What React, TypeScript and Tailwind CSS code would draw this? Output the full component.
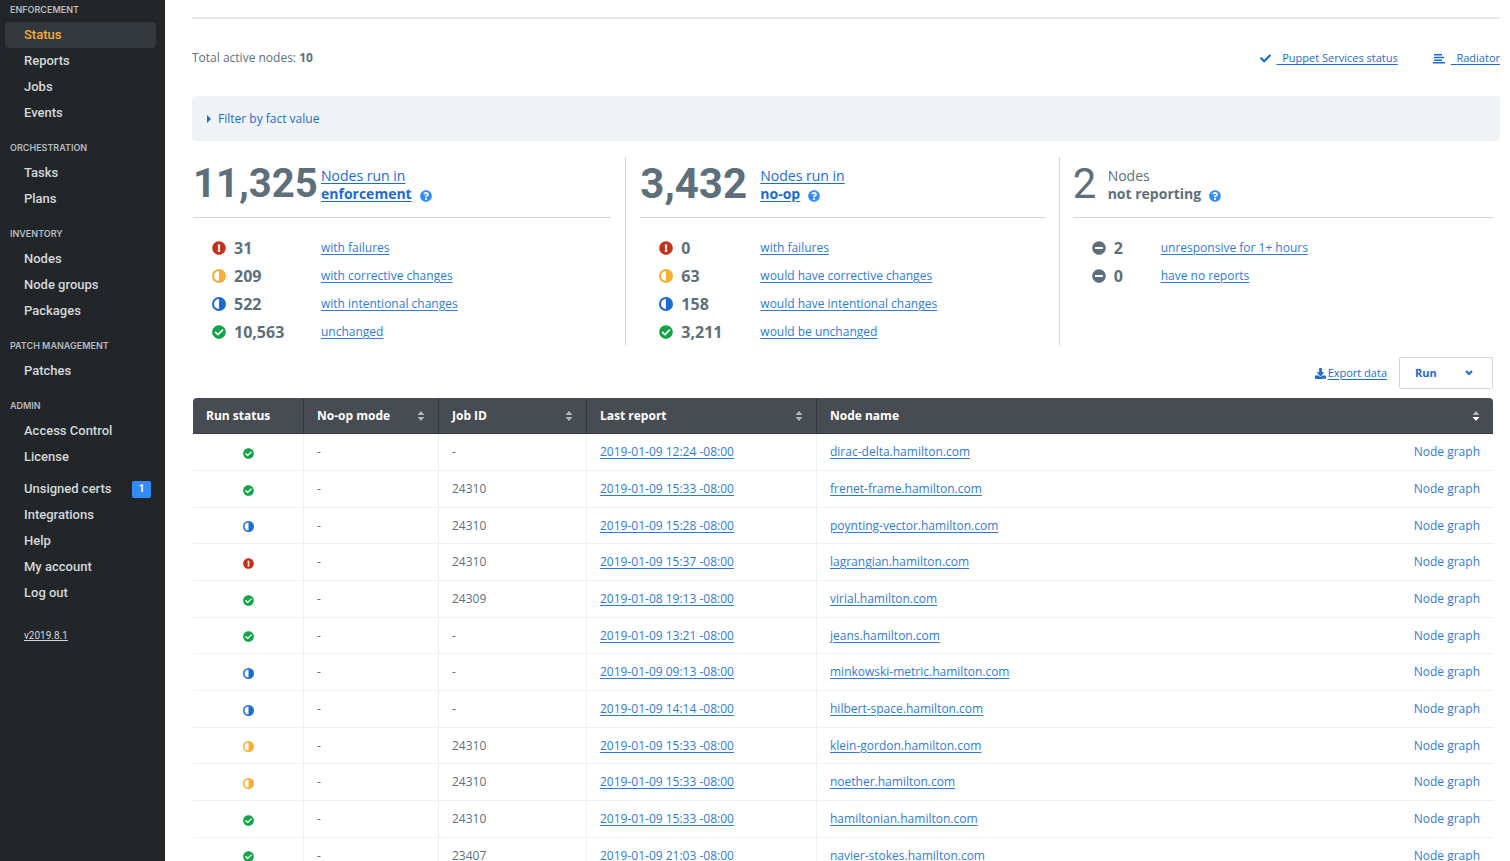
import type { ReactNode } from 'react'
import { FaCheck, FaCheckCircle, FaDownload, FaExclamationCircle, FaMinusCircle, FaQuestionCircle } from 'react-icons/fa'

type Status = 'failed' | 'corrective' | 'intentional' | 'unchanged' | 'silent'

type NavItem = { label: string; active?: boolean; badge?: number }

const nav: { title: string; items: NavItem[] }[] = [
  {
    title: 'Enforcement',
    items: [{ label: 'Status', active: true }, { label: 'Reports' }, { label: 'Jobs' }, { label: 'Events' }],
  },
  { title: 'Orchestration', items: [{ label: 'Tasks' }, { label: 'Plans' }] },
  { title: 'Inventory', items: [{ label: 'Nodes' }, { label: 'Node groups' }, { label: 'Packages' }] },
  { title: 'Patch management', items: [{ label: 'Patches' }] },
  {
    title: 'Admin',
    items: [
      { label: 'Access Control' },
      { label: 'License' },
      { label: 'Unsigned certs', badge: 1 },
      { label: 'Integrations' },
      { label: 'Help' },
      { label: 'My account' },
      { label: 'Log out' },
    ],
  },
]

const enforcement: [Status, string, string][] = [
  ['failed', '31', 'with failures'],
  ['corrective', '209', 'with corrective changes'],
  ['intentional', '522', 'with intentional changes'],
  ['unchanged', '10,563', 'unchanged'],
]

const noop: [Status, string, string][] = [
  ['failed', '0', 'with failures'],
  ['corrective', '63', 'would have corrective changes'],
  ['intentional', '158', 'would have intentional changes'],
  ['unchanged', '3,211', 'would be unchanged'],
]

const silent: [Status, string, string][] = [
  ['silent', '2', 'unresponsive for 1+ hours'],
  ['silent', '0', 'have no reports'],
]

const rows: { status: Status; job: string; report: string; node: string }[] = [
  { status: 'unchanged', job: '-', report: '2019-01-09 12:24 -08:00', node: 'dirac-delta.hamilton.com' },
  { status: 'unchanged', job: '24310', report: '2019-01-09 15:33 -08:00', node: 'frenet-frame.hamilton.com' },
  { status: 'intentional', job: '24310', report: '2019-01-09 15:28 -08:00', node: 'poynting-vector.hamilton.com' },
  { status: 'failed', job: '24310', report: '2019-01-09 15:37 -08:00', node: 'lagrangian.hamilton.com' },
  { status: 'unchanged', job: '24309', report: '2019-01-08 19:13 -08:00', node: 'virial.hamilton.com' },
  { status: 'unchanged', job: '-', report: '2019-01-09 13:21 -08:00', node: 'jeans.hamilton.com' },
  { status: 'intentional', job: '-', report: '2019-01-09 09:13 -08:00', node: 'minkowski-metric.hamilton.com' },
  { status: 'intentional', job: '-', report: '2019-01-09 14:14 -08:00', node: 'hilbert-space.hamilton.com' },
  { status: 'corrective', job: '24310', report: '2019-01-09 15:33 -08:00', node: 'klein-gordon.hamilton.com' },
  { status: 'corrective', job: '24310', report: '2019-01-09 15:33 -08:00', node: 'noether.hamilton.com' },
  { status: 'unchanged', job: '24310', report: '2019-01-09 15:33 -08:00', node: 'hamiltonian.hamilton.com' },
  { status: 'unchanged', job: '23407', report: '2019-01-09 21:03 -08:00', node: 'navier-stokes.hamilton.com' },
]

function HalfCircle({ className }: { className: string }) {
  return (
    <svg viewBox="0 0 14 14" className={className} aria-hidden="true">
      <circle cx="7" cy="7" r="6" fill="none" stroke="currentColor" strokeWidth="2" />
      <path d="M7 1a6 6 0 0 1 0 12z" fill="currentColor" />
    </svg>
  )
}

function StatusIcon({ status, small }: { status: Status; small?: boolean }) {
  const size = small ? 'size-[11px]' : 'size-[14px]'
  if (status === 'failed') return <FaExclamationCircle className={`${size} text-[#c5301a]`} />
  if (status === 'corrective') return <HalfCircle className={`${size} text-[#f8ad33]`} />
  if (status === 'intentional') return <HalfCircle className={`${size} text-[#1b6bd0]`} />
  if (status === 'unchanged') return <FaCheckCircle className={`${size} text-[#0fa448]`} />
  return <FaMinusCircle className={`${size} text-[#5c6f7b]`} />
}

function SortIcon({ active }: { active?: boolean }) {
  return (
    <svg viewBox="0 0 8 12" className="w-2 h-3" aria-hidden="true">
      <path d="M4 1l3.5 4h-7z" fill="#b1b8bd" />
      <path d="M4 11l3.5-4h-7z" fill={active ? '#ffffff' : '#b1b8bd'} />
    </svg>
  )
}

function Sidebar() {
  return (
    <nav className="w-[165px] shrink-0 bg-[#222629] pt-1 font-[Roboto,sans-serif]">
      {nav.map(section => (
        <section key={section.title} className="mb-4">
          <h2 className="mb-1.5 pl-[10px] font-[Inter,sans-serif] text-[9px] leading-3 font-semibold uppercase text-[#b5bcc1]">
            {section.title}
          </h2>
          <ul className="pr-[9px] pl-[5px]">
            {section.items.map(item => (
              <li key={item.label} className={item.badge ? 'mt-1.5' : ''}>
                <a
                  href="#"
                  className={`flex h-[26px] items-center justify-between rounded-sm pl-[19px] pr-[5px] text-[13px] font-medium ${
                    item.active ? 'bg-[#33383d] text-[#f8ad33]' : 'text-[#d3d8db]'
                  }`}
                >
                  {item.label}
                  {item.badge && (
                    <span className="flex h-[17px] w-[19px] items-center justify-center rounded-xs bg-[#318bfb] text-[10px] font-bold text-white">
                      {item.badge}
                    </span>
                  )}
                </a>
              </li>
            ))}
          </ul>
        </section>
      ))}
      <a href="#" className="mt-1.5 ml-6 inline-block text-[10px] leading-4 text-[#d3d8db] underline">v2019.8.1</a>
    </nav>
  )
}

function HelpButton() {
  return (
    <button aria-label="Help" className="ml-2 align-[-3px] text-[#318bfb]">
      <FaQuestionCircle className="size-3" />
    </button>
  )
}

type SummaryProps = {
  total: string
  title: ReactNode
  items: [Status, string, string][]
  totalClass: string
  countClass: string
  className: string
}

function Summary({ total, title, items, totalClass, countClass, className }: SummaryProps) {
  return (
    <section className={`h-[188px] ${className}`}>
      <div className="flex h-[61px] items-center border-b border-[#cfd7db] pb-1.5">
        <div className={`font-[Roboto,sans-serif] leading-[50px] text-[#5c6f7b] ${totalClass}`}>{total}</div>
        <div className="mt-0.5 text-sm leading-[18px]">
          {title}
          <HelpButton />
        </div>
      </div>
      <ul className="mt-4 pl-[19px]">
        {items.map(([status, count, label]) => (
          <li key={label} className="flex h-7 items-center">
            <StatusIcon status={status} />
            <span className={`ml-2 text-base font-bold text-[#5c6f7b] ${countClass}`}>{count}</span>
            <a href="#" className="text-xs text-[#2f7bd3] underline underline-offset-2">{label}</a>
          </li>
        ))}
      </ul>
    </section>
  )
}

function HeadCell({ label, sort, active, className }: { label: string; sort?: boolean; active?: boolean; className?: string }) {
  return (
    <th className={`h-9 border-r border-b border-[#33393e] bg-[#464c51] px-[13px] text-left font-bold last:border-r-0 ${className ?? ''}`}>
      {sort ? (
        <button className="flex w-full items-center justify-between font-bold">
          {label}
          <SortIcon active={active} />
        </button>
      ) : (
        label
      )}
    </th>
  )
}

export default function App() {
  return (
    <div className="flex h-screen overflow-hidden bg-white font-['Open_Sans',sans-serif] text-xs text-[#5c6f7b]">
      <Sidebar />

      <main className="min-w-0 flex-1 pt-[17px] pr-[10px] pl-[27px]">
        <div className="flex h-[79px] items-center justify-between border-t-2 border-[#e3e9ed]">
          <p>
            Total active nodes: <strong>10</strong>
          </p>
          <div className="flex gap-[35px] pt-0.5 text-[11px] text-[#1b6bd0]">
            <a href="#" className="flex items-center gap-1.5">
              <FaCheck className="size-[11px]" />
              <span className="whitespace-pre underline underline-offset-2">{'  '}Puppet Services status</span>
            </a>
            <a href="#" className="flex items-center gap-1.5">
              <svg viewBox="0 0 12 10" className="h-[10px] w-3" fill="currentColor" aria-hidden="true">
                <path d="M1 0h8v1.500H1zM1 2.700h10v1.500H1zM1 5.400h8v1.500H1zM0 8h12v1.500H0z" />
              </svg>
              <span className="whitespace-pre underline underline-offset-2">{'  '}Radiator</span>
            </a>
          </div>
        </div>

        <div className="flex h-[45px] items-center rounded bg-[#f0f3f6] pl-[15px]">
          <button className="flex items-center gap-[7px] text-[#1b6bd0]">
            <svg viewBox="0 0 4 8" className="h-2 w-1" aria-hidden="true">
              <path d="M0 0l4 4-4 4z" fill="currentColor" />
            </svg>
            Filter by fact value
          </button>
        </div>

        <div className="mr-[7px] ml-px">
          <div className="mt-4 grid grid-cols-3">
            <Summary
              total="11,325"
              totalClass="w-32 text-[40px] font-bold"
              countClass="w-[87px]"
              className="border-r border-[#cfd7db] pr-[14px]"
              items={enforcement}
              title={
                <a href="#" className="text-[#1b6bd0] underline underline-offset-2">
                  Nodes run in<br /><strong>enforcement</strong>
                </a>
              }
            />
            <Summary
              total="3,432"
              totalClass="w-[120px] text-[42px] font-bold"
              countClass="w-[79px]"
              className="border-r border-[#cfd7db] px-[14px]"
              items={noop}
              title={
                <a href="#" className="text-[#1b6bd0] underline underline-offset-2">
                  Nodes run in<br /><strong>no-op</strong>
                </a>
              }
            />
            <Summary
              total="2"
              totalClass="w-[35px] text-[42px]"
              countClass="w-[47px]"
              className="pl-[13px]"
              items={silent}
              title={<>Nodes<br /><strong>not reporting</strong></>}
            />
          </div>

          <div className="mt-3 flex items-center justify-end gap-3 text-[11px] text-[#1b6bd0]">
            <a href="#" className="flex items-center gap-0.5">
              <FaDownload className="size-[11px]" />
              <span className="underline underline-offset-2">Export data</span>
            </a>
            <button className="flex h-8 w-[94px] items-center justify-between rounded-xs border border-[#cdd6db] px-[15px] font-bold">
              Run
              <svg viewBox="0 0 8 6" className="mr-1 h-1.5 w-2" fill="none" stroke="currentColor" strokeWidth="2" aria-hidden="true">
                <path d="M1 1l3 3 3-3" />
              </svg>
            </button>
          </div>

          <table className="mt-[9px] w-full table-fixed border-separate border-spacing-0">
            <thead className="text-white">
              <tr>
                <HeadCell label="Run status" className="w-[111px] rounded-tl" />
                <HeadCell label="No-op mode" sort className="w-[135px]" />
                <HeadCell label="Job ID" sort className="w-[148px]" />
                <HeadCell label="Last report" sort className="w-[230px]" />
                <HeadCell label="Node name" sort active className="rounded-tr" />
              </tr>
            </thead>
            <tbody>
              {rows.map(row => (
                <tr key={row.node} className="h-[37px] nth-[3n]:h-9 *:border-r *:border-b *:border-[#eef1f4] *:px-[13px] *:last:border-r-0">
                  <td>
                    <span className="flex justify-center pt-0.5">
                      <StatusIcon status={row.status} small />
                    </span>
                  </td>
                  <td>-</td>
                  <td>{row.job}</td>
                  <td>
                    <a href="#" className="text-[#2f7bd3] underline underline-offset-2">{row.report}</a>
                  </td>
                  <td>
                    <div className="flex justify-between text-[#2f7bd3]">
                      <a href="#" className="underline underline-offset-2">{row.node}</a>
                      <a href="#">Node graph</a>
                    </div>
                  </td>
                </tr>
              ))}
            </tbody>
          </table>
        </div>
      </main>
    </div>
  )
}
